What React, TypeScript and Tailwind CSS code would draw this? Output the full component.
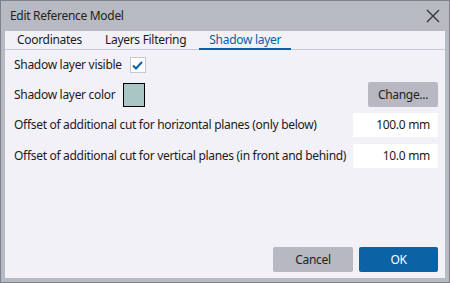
import { useState } from "react"

const TABS = ["Coordinates", "Layers Filtering", "Shadow layer"]

function App() {
    const [tab, setTab] = useState(2)
    const [visible, setVisible] = useState(true)

    return (
        <div className="flex h-[283px] w-[450px] flex-col border border-[#7e808a] bg-[#b8bac3] font-['Noto_Sans',sans-serif] text-[12px] tracking-[-0.3px] text-[#1b1b1b]">
            <div className="flex h-[30px] shrink-0 items-center justify-between pl-[9px] pr-[9px]">
                <span className="text-[#222]">Edit Reference Model</span>
                <svg width="14" height="14" viewBox="0 0 14 14" className="text-[#333]">
                    <path d="M1 1 L13 13 M13 1 L1 13" stroke="currentColor" strokeWidth="1.3" />
                </svg>
            </div>
            <div className="mx-[4px] flex flex-1 flex-col bg-[#f2f1f7]">
                <div className="flex h-[19px] shrink-0 items-end gap-[3px] border-b border-[#c9c9d1] pl-[2px]">
                    {TABS.map((t, i) => (
                        <button
                            key={t}
                            onClick={() => setTab(i)}
                            className={
                                i === tab
                                    ? "-mb-px flex h-[19px] items-center border-b-2 border-[#0b5fa2] px-[10px] text-[#0b5fa2]"
                                    : "flex h-[18px] items-center px-[10px] text-[#1b1b1b]"
                            }
                        >
                            {t}
                        </button>
                    ))}
                </div>
                <div className="flex flex-1 flex-col pl-[9px] pr-[7px] pt-[7px]">
                    <div className="flex h-[16px] items-center gap-[8px]">
                        <span>Shadow layer visible</span>
                        <button
                            onClick={() => setVisible(!visible)}
                            className="flex h-[16px] w-[16px] items-center justify-center border border-[#c7c7cc] bg-white"
                        >
                            {visible && (
                                <svg width="11" height="9" viewBox="0 0 11 9">
                                    <path d="M1 4.5 L4 7.5 L10 1" fill="none" stroke="#0b5fa2" strokeWidth="2" />
                                </svg>
                            )}
                        </button>
                    </div>
                    <div className="mt-[9px] flex h-[25px] items-center">
                        <span className="w-[109px]">Shadow layer color</span>
                        <div className="h-[24px] w-[22px] border border-black bg-[#a9c6c5]" />
                        <div className="flex-1" />
                        <button className="h-[25px] w-[70px] rounded-[2px] bg-[#b7b8c1] text-[#222]">Change...</button>
                    </div>
                    <div className="mt-[6px] flex h-[24px] items-center justify-between">
                        <span>Offset of additional cut for horizontal planes (only below)</span>
                        <div className="flex h-[24px] w-[85px] items-center justify-end bg-white pr-[8px]">100.0 mm</div>
                    </div>
                    <div className="mt-[7px] flex h-[24px] items-center justify-between">
                        <span>Offset of additional cut for vertical planes (in front and behind)</span>
                        <div className="flex h-[24px] w-[85px] items-center justify-end bg-white pr-[8px]">10.0 mm</div>
                    </div>
                    <div className="flex-1" />
                    <div className="mb-[6px] flex justify-end gap-[6px]">
                        <button className="h-[25px] w-[80px] rounded-[2px] bg-[#b7b8c1] text-[#222]">Cancel</button>
                        <button className="h-[25px] w-[79px] rounded-[2px] bg-[#0b62a5] text-white">OK</button>
                    </div>
                </div>
            </div>
            <div className="h-[4px] shrink-0" />
        </div>
    )
}

export default App
